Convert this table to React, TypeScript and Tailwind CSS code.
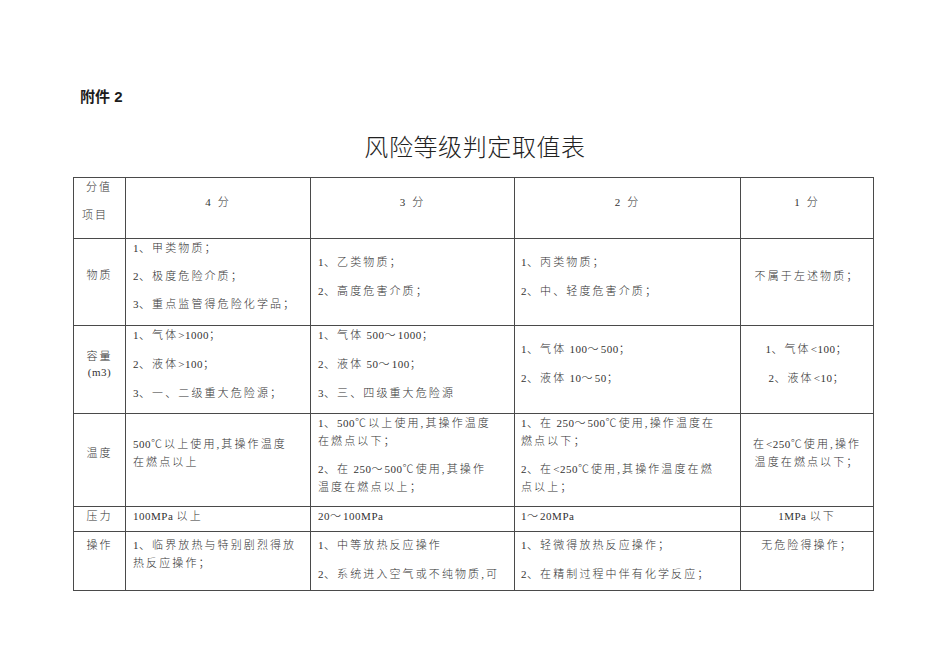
import React from "react";

type Cell = {
  paras: string[][];
  pad: string;
  center?: boolean;
  gap?: string;
  lead?: string;
};

const body = "font-['Liberation_Serif','Noto_Sans_CJK_SC',serif]";

const rows: Cell[][] = [
  [
    { paras: [["物质"]], pad: "pt-[27px]", center: true },
    {
      paras: [["1、甲类物质；"], ["2、极度危险介质；"], ["3、重点监管得危险化学品；"]],
      pad: "pt-0 pl-[7px]",
      gap: "gap-[10px]",
    },
    {
      paras: [["1、乙类物质；"], ["2、高度危害介质；"]],
      pad: "pt-[14px] pl-[7px]",
      gap: "gap-[11px]",
    },
    {
      paras: [["1、丙类物质；"], ["2、中、轻度危害介质；"]],
      pad: "pt-[14px] pl-[6px]",
      gap: "gap-[11px]",
    },
    { paras: [["不属于左述物质；"]], pad: "pt-[28px]", center: true },
  ],
  [
    { paras: [["容量", "(m3)"]], pad: "pt-[22px]", center: true, lead: "leading-[16px]" },
    {
      paras: [["1、气体>1000；"], ["2、液体>100；"], ["3、一、二级重大危险源；"]],
      pad: "pt-0 pl-[7px]",
      gap: "gap-[11px]",
    },
    {
      paras: [["1、气体 500～1000；"], ["2、液体 50～100；"], ["3、三、四级重大危险源"]],
      pad: "pt-0 pl-[7px]",
      gap: "gap-[11px]",
    },
    {
      paras: [["1、气体 100～500；"], ["2、液体 10～50；"]],
      pad: "pt-[14px] pl-[6px]",
      gap: "gap-[11px]",
    },
    {
      paras: [["1、气体<100；"], ["2、液体<10；"]],
      pad: "pt-[14px]",
      center: true,
      gap: "gap-[11px]",
    },
  ],
  [
    { paras: [["温度"]], pad: "pt-[30px]", center: true },
    { paras: [["500℃以上使用,其操作温度", "在燃点以上"]], pad: "pt-[21px] pl-[7px]" },
    {
      paras: [
        ["1、500℃以上使用,其操作温度", "在燃点以下；"],
        ["2、在 250～500℃使用,其操作", "温度在燃点以上；"],
      ],
      pad: "pt-0 pl-[7px]",
      gap: "gap-[10px]",
    },
    {
      paras: [
        ["1、在 250～500℃使用,操作温度在", "燃点以下；"],
        ["2、在<250℃使用,其操作温度在燃", "点以上；"],
      ],
      pad: "pt-0 pl-[6px]",
      gap: "gap-[10px]",
    },
    { paras: [["在<250℃使用,操作", "温度在燃点以下；"]], pad: "pt-[21px]", center: true },
  ],
  [
    { paras: [["压力"]], pad: "pt-0", center: true },
    { paras: [["100MPa 以上"]], pad: "pt-0 pl-[7px]" },
    { paras: [["20～100MPa"]], pad: "pt-0 pl-[7px]" },
    { paras: [["1～20MPa"]], pad: "pt-0 pl-[6px]" },
    { paras: [["1MPa 以下"]], pad: "pt-0", center: true },
  ],
  [
    { paras: [["操作"]], pad: "pt-[4px]", center: true },
    { paras: [["1、临界放热与特别剧烈得放", "热反应操作；"]], pad: "pt-[4px] pl-[7px]" },
    {
      paras: [["1、中等放热反应操作"], ["2、系统进入空气或不纯物质,可"]],
      pad: "pt-[4px] pl-[7px]",
      gap: "gap-[11px]",
    },
    {
      paras: [["1、轻微得放热反应操作；"], ["2、在精制过程中伴有化学反应；"]],
      pad: "pt-[4px] pl-[6px]",
      gap: "gap-[11px]",
    },
    { paras: [["无危险得操作；"]], pad: "pt-[4px]", center: true },
  ],
];

const cellBase = "border-r border-b border-[#4a4a4a] overflow-hidden";

// latin runs are set tighter than the CJK ones
const Line = ({ text, lead }: { text: string; lead: string }) => (
  <span className={`whitespace-nowrap ${lead}`}>
    {text.split(/([0-9A-Za-z ()<>.]+)/).map((part, i) =>
      i % 2 === 1 ? (
        <span key={i} className="tracking-[0.5px]">
          {part}
        </span>
      ) : (
        part
      )
    )}
  </span>
);

const TableCell = ({ cell }: { cell: Cell }) => (
  <div
    className={`${cellBase} flex flex-col ${cell.pad} ${cell.gap ?? ""} ${
      cell.center ? "items-center text-center" : "items-start"
    }`}
  >
    {cell.paras.map((p, i) => (
      <div key={i} className="flex flex-col">
        {p.map((line) => (
          <Line key={line} text={line} lead={cell.lead ?? "leading-[18px]"} />
        ))}
      </div>
    ))}
  </div>
);

export default function App() {
  return (
    <div className="w-[950px] h-[672px] bg-white px-[73px] pt-[87px] text-[#1c1c1c]">
      <div className="ml-[7px] h-[20px] leading-[20px] text-[15px] font-bold font-['Liberation_Sans','Noto_Sans_CJK_SC',sans-serif]">
        附件 2
      </div>
      <h1 className="mt-[23px] -ml-[73px] w-[950px] text-center text-[24px] leading-[32px] tracking-[0.6px] font-['Noto_Sans_CJK_SC',sans-serif] font-light text-[#222]">
        风险等级判定取值表
      </h1>
      <div
        className={`mt-[15px] w-[801px] grid grid-cols-[52px_185px_204px_226px_133px] grid-rows-[61px_87px_88px_93px_25px_59px] border-t border-l border-[#4a4a4a] text-[11px] tracking-[2.1px] text-[#333] font-light ${body}`}
      >
        <div className={`${cellBase} flex flex-col gap-[10px] leading-[18px]`}>
          <span className="pl-[12px]">分值</span>
          <span className="pl-[8px]">项目</span>
        </div>
        {["4 分", "3 分", "2 分", "1 分"].map((t) => (
          <div key={t} className={`${cellBase} pt-[15px] text-center leading-[18px]`}>
            {t}
          </div>
        ))}
        {rows.map((r, ri) =>
          r.map((c, ci) => <TableCell key={`${ri}-${ci}`} cell={c} />)
        )}
      </div>
    </div>
  );
}
